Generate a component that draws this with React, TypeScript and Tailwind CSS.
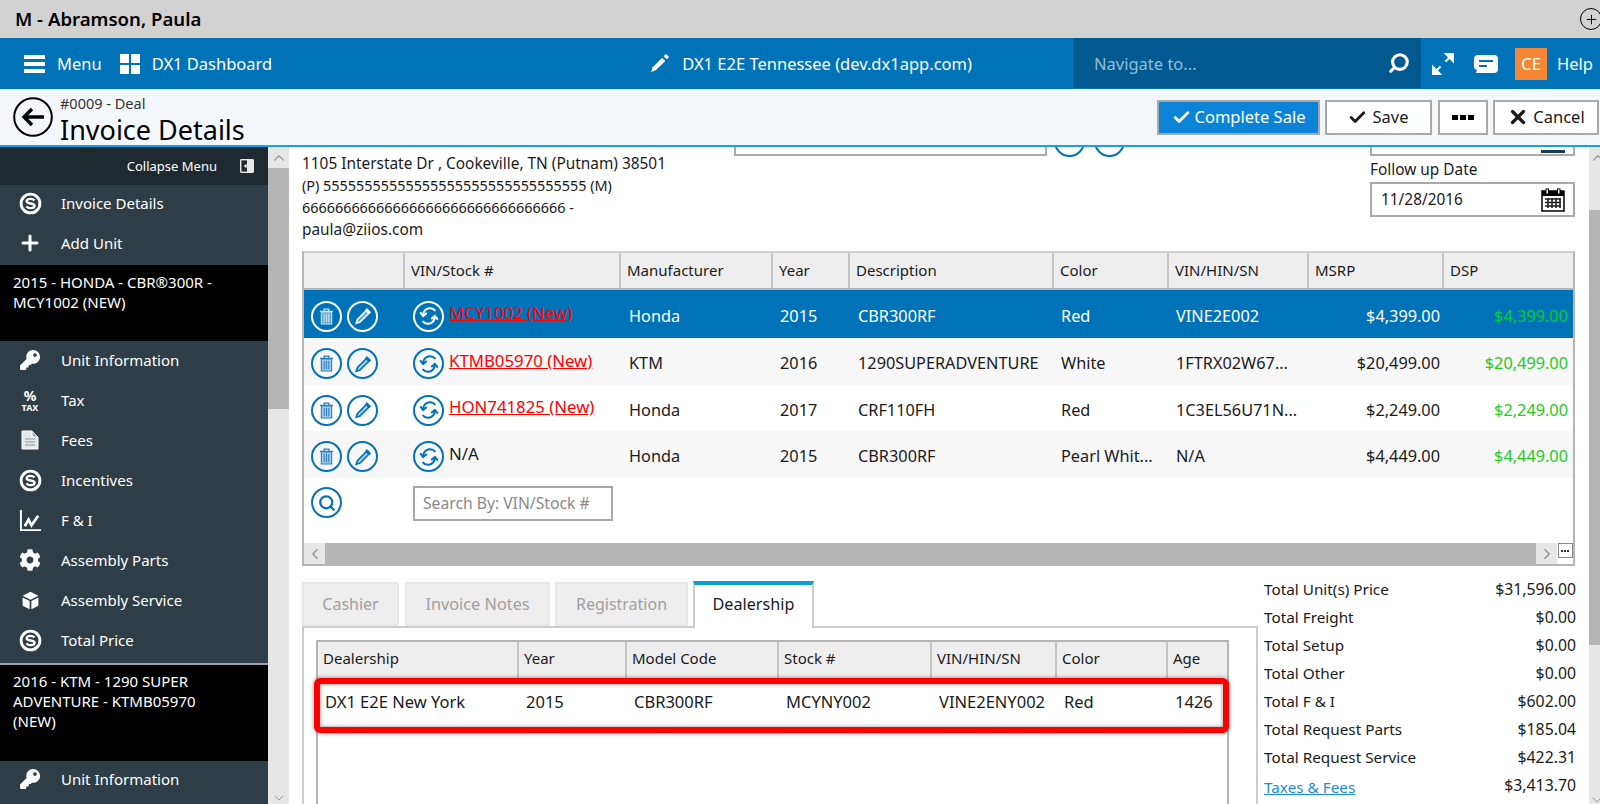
import { Check, ChevronDown, ChevronLeft, ChevronRight, ChevronUp, Plus, Search, X } from "lucide-react";
import { FaCog, FaKey } from "react-icons/fa";

const unitCols = "grid grid-cols-[101px_216px_152px_77px_204px_115px_140px_135px_131px]";
const dealerCols = "grid grid-cols-[201px_108px_152px_153px_125px_111px_63px]";

const units = [
  { stock: "MCY1002 (New)", link: true, make: "Honda", year: "2015", desc: "CBR300RF", color: "Red", vin: "VINE2E002", msrp: "$4,399.00", dsp: "$4,399.00" },
  { stock: "KTMB05970 (New)", link: true, make: "KTM", year: "2016", desc: "1290SUPERADVENTURE", color: "White", vin: "1FTRX02W67...", msrp: "$20,499.00", dsp: "$20,499.00" },
  { stock: "HON741825 (New)", link: true, make: "Honda", year: "2017", desc: "CRF110FH", color: "Red", vin: "1C3EL56U71N...", msrp: "$2,249.00", dsp: "$2,249.00" },
  { stock: "N/A", link: false, make: "Honda", year: "2015", desc: "CBR300RF", color: "Pearl Whit...", vin: "N/A", msrp: "$4,449.00", dsp: "$4,449.00" },
];

const totals = [
  ["Total Unit(s) Price", "$31,596.00"],
  ["Total Freight", "$0.00"],
  ["Total Setup", "$0.00"],
  ["Total Other", "$0.00"],
  ["Total F & I", "$602.00"],
  ["Total Request Parts", "$185.04"],
  ["Total Request Service", "$422.31"],
];

function DollarIcon() {
  return (
    <svg viewBox="0 0 24 24" className="h-[23px] w-[23px]" fill="none" stroke="white">
      <circle cx="12" cy="12" r="9.8" strokeWidth="3" />
      <path d="M16.2 8.8C15 7.6 13.6 7.2 12 7.2c-2.2 0-4 .9-4 2.5 0 3.4 8.2 1.3 8.2 4.6 0 1.6-1.9 2.5-4.2 2.5-1.7 0-3.2-.5-4.3-1.7" strokeWidth="2.5" />
    </svg>
  );
}

function TaxIcon() {
  return (
    <div className="flex flex-col items-center font-bold leading-none text-white">
      <span className="text-[14px] leading-[14px]">%</span>
      <span className="text-[9px] leading-[9px]">TAX</span>
    </div>
  );
}

function FileIcon() {
  return (
    <svg viewBox="0 0 18 20" className="h-[20px] w-[18px]">
      <path d="M1 1h10l6 6v12H1z" fill="#e4e8ea" stroke="white" />
      <path d="M11 1v6h6" fill="#9fb0b8" stroke="white" />
      <path d="M4 9h10M4 12h10M4 15h10" stroke="#87979f" />
    </svg>
  );
}

function ChartIcon() {
  return (
    <svg viewBox="0 0 24 24" className="h-[23px] w-[23px]" fill="none" stroke="white">
      <path d="M2 1v21h21" strokeWidth="2" />
      <path d="M6 18l4-7 3 6 7-10" strokeWidth="2.8" />
    </svg>
  );
}

function CubeIcon() {
  return (
    <svg viewBox="0 0 24 24" className="h-[21px] w-[21px]" fill="white">
      <path d="M12 2l9 4.5-9 4.5-9-4.5z" />
      <path d="M3 8.5l8 4V22l-8-4z" />
      <path d="M21 8.5l-8 4V22l8-4z" />
    </svg>
  );
}

function SideItem({ icon, label }: { icon: React.ReactNode; label: string }) {
  return (
    <div className="flex h-[40px] items-center text-white">
      <div className="flex w-[61px] justify-center pr-[1px]">{icon}</div>
      <span>{label}</span>
    </div>
  );
}

function Sidebar() {
  return (
    <div className="w-[268px] shrink-0 overflow-hidden bg-[#2f3e46] text-[15px]">
      <div className="flex h-[38px] items-center justify-end bg-[#1f2a30] pr-[14px] text-[13px] text-white">
        <span className="pt-[2px]">Collapse Menu</span>
        <svg viewBox="0 0 15 15" className="ml-[23px] h-[14px] w-[14px]">
          <rect width="15" height="15" rx="1.5" fill="#e8e8e8" />
          <rect x="1.5" y="1.5" width="6" height="12" fill="#1f2a30" />
          <path d="M7 5L4 7.5 7 10z" fill="white" />
        </svg>
      </div>
      <div className="-mt-[2px] h-[82px]">
        <SideItem icon={<DollarIcon />} label="Invoice Details" />
        <SideItem icon={<Plus className="h-[24px] w-[24px]" strokeWidth={3} />} label="Add Unit" />
      </div>
      <div className="h-[76px] bg-black px-[13px] pt-[7px] leading-[20px] text-white">
        2015 - HONDA - CBR®300R - MCY1002 (NEW)
      </div>
      <div className="-mt-[1px]">
        <SideItem icon={<FaKey className="h-[20px] w-[20px]" />} label="Unit Information" />
        <SideItem icon={<TaxIcon />} label="Tax" />
        <SideItem icon={<FileIcon />} label="Fees" />
        <SideItem icon={<DollarIcon />} label="Incentives" />
        <SideItem icon={<ChartIcon />} label="F & I" />
        <SideItem icon={<FaCog className="h-[22px] w-[22px]" />} label="Assembly Parts" />
        <SideItem icon={<CubeIcon />} label="Assembly Service" />
        <SideItem icon={<DollarIcon />} label="Total Price" />
      </div>
      <div className="mt-[3px] h-[2px] bg-[#9aa3a8]" />
      <div className="h-[96px] bg-black px-[13px] pt-[6px] leading-[20px] text-white">
        2016 - KTM - 1290 SUPER
        <br />
        ADVENTURE - KTMB05970
        <br />
        (NEW)
      </div>
      <div className="-mt-[2px]">
        <SideItem icon={<FaKey className="h-[20px] w-[20px]" />} label="Unit Information" />
      </div>
    </div>
  );
}

function CircleButton({ selected, children }: { selected?: boolean; children: React.ReactNode }) {
  return (
    <div className={selected ? "flex h-[31px] w-[31px] items-center justify-center rounded-full border-2 border-white text-white" : "flex h-[31px] w-[31px] items-center justify-center rounded-full border-2 border-[#0072b8] text-[#0072b8]"}>
      {children}
    </div>
  );
}

function TrashIcon({ selected }: { selected: boolean }) {
  return (
    <svg viewBox="0 0 16 18" className="h-[17px] w-[15px]" fill="none" stroke={selected ? "#cfe6f5" : "#2a7fba"}>
      <path d="M1 3.5h14M5.5 3V1.2h5V3" strokeWidth="1.4" />
      <path d="M2.5 4h11v13h-11z" fill={selected ? "#5ea6d4" : "#a9cfe8"} strokeWidth="1.2" />
      <path d="M5.5 6v9M8 6v9M10.5 6v9" strokeWidth="1.2" />
    </svg>
  );
}

function PencilIcon({ selected }: { selected: boolean }) {
  return (
    <svg viewBox="0 0 20 20" className="h-[20px] w-[20px]" fill="none" stroke="currentColor">
      <path d="M13.5 4.5l2.5 2.5L7 16l-3.8 1.2L4.5 13.5z" fill={selected ? "#5ea6d4" : "#a9cfe8"} strokeWidth="1.6" />
      <path d="M14 2.6l3.6 3.6-1.6 1.6-3.6-3.6z" fill="currentColor" strokeWidth="1" />
    </svg>
  );
}

function SwapIcon() {
  return (
    <svg viewBox="0 0 24 24" className="h-[22px] w-[22px]" fill="none" stroke="currentColor" strokeWidth="2.2">
      <path d="M19 6.5C17 4 14.5 3.2 12 3.6 8.6 4.2 6 7 5.6 11" />
      <path d="M2.4 8l3.2 4 4-3.2" />
      <path d="M5 17.5C7 20 9.5 20.8 12 20.4c3.4-.6 6-3.4 6.4-7.4" />
      <path d="M21.6 16l-3.2-4-4 3.2" />
    </svg>
  );
}

function UnitsTable() {
  return (
    <div className="flex h-[315px] w-[1273px] flex-col border-x-2 border-b-2 border-t-2 border-[#b5b5b5] border-t-[#d0d0d0] bg-white">
      <div className={`${unitCols} h-[37px] items-center border-b-2 border-[#b5b5b5] bg-[#eeeeee] text-[15px]`}>
        {["", "VIN/Stock #", "Manufacturer", "Year", "Description", "Color", "VIN/HIN/SN", "MSRP", "DSP"].map((h) => (
          <div key={h} className="flex h-full items-center border-r-2 border-[#c4c4c4] pl-[6px] last:border-r-0">{h}</div>
        ))}
      </div>
      {units.map((u, i) => (
        <div
          key={u.stock + i}
          className={i === 0 ? `${unitCols} h-[48px] items-center bg-[#0072b8] text-[16.3px] text-white` : i % 2 === 1 ? `${unitCols} h-[47px] items-center bg-[#f7f7f7] text-[16.3px]` : `${unitCols} h-[46px] items-center bg-white text-[16.3px]`}
        >
          <div className="flex gap-[5px] pl-[7px] pt-[4px]">
            <CircleButton selected={i === 0}><TrashIcon selected={i === 0} /></CircleButton>
            <CircleButton selected={i === 0}><PencilIcon selected={i === 0} /></CircleButton>
          </div>
          <div className="flex items-center pl-[8px] pt-[4px]">
            <CircleButton selected={i === 0}><SwapIcon /></CircleButton>
            <span className={u.link ? "ml-[5px] -translate-y-[3px] text-[16.8px] text-[#ff0000] underline" : "ml-[5px] -translate-y-[3px] text-[16.8px]"}>{u.stock}</span>
          </div>
          <div className="pl-[8px] pt-[4px]">{u.make}</div>
          <div className="pl-[7px] pt-[4px]">{u.year}</div>
          <div className="whitespace-nowrap pl-[8px] pt-[4px]">{u.desc}</div>
          <div className="pl-[7px] pt-[4px]">{u.color}</div>
          <div className="pl-[7px] pt-[4px]">{u.vin}</div>
          <div className="pr-[4px] pt-[4px] text-right">{u.msrp}</div>
          <div className={i === 0 ? "pr-[7px] pt-[4px] text-right text-[#00cc33]" : "pr-[7px] pt-[4px] text-right text-[#22cc22]"}>{u.dsp}</div>
        </div>
      ))}
      <div className={`${unitCols} flex-1`}>
        <div className="pl-[7px] pt-[9px]">
          <CircleButton><Search className="h-[18px] w-[18px]" strokeWidth={3} /></CircleButton>
        </div>
        <div className="pl-[8px] pt-[8px]">
          <div className="flex h-[35px] w-[200px] items-center whitespace-nowrap border-2 border-[#a9a9a9] pl-[8px] pt-[1px] text-[15.7px] text-[#8a8a8a]">Search By: VIN/Stock #</div>
        </div>
      </div>
      <div className="flex h-[21px] items-stretch bg-[#b5b5b5]">
        <div className="flex w-[21px] items-center justify-center bg-[#e6e6e6] text-[#8a8a8a]"><ChevronLeft className="h-[18px] w-[18px]" strokeWidth={1.5} /></div>
        <div className="flex-1" />
        <div className="flex w-[21px] items-center justify-center bg-[#e6e6e6] text-[#8a8a8a]"><ChevronRight className="h-[18px] w-[18px]" strokeWidth={1.5} /></div>
        <div className="flex w-[16px] items-start justify-center bg-white">
          <div className="flex h-[15px] w-[15px] items-center justify-center gap-[1px] border border-[#888888]">
            <div className="h-[2px] w-[2px] bg-[#333333]" />
            <div className="h-[2px] w-[2px] bg-[#333333]" />
            <div className="h-[2px] w-[2px] bg-[#333333]" />
          </div>
        </div>
      </div>
    </div>
  );
}

function DealershipPanel() {
  return (
    <div className="flex w-[956px] flex-col pt-[16px]">
      <div className="flex h-[44px] text-[16px]">
        <div className="flex w-[97px] items-center justify-center border-2 border-[#e8e8e8] bg-[#eeeeee] text-[#a0a0a0]">Cashier</div>
        <div className="ml-[6px] flex w-[145px] items-center justify-center whitespace-nowrap border-2 border-[#e8e8e8] bg-[#eeeeee] text-[16.3px] text-[#a0a0a0]">Invoice Notes</div>
        <div className="ml-[5px] flex w-[133px] items-center justify-center border-2 border-[#e8e8e8] bg-[#eeeeee] text-[#a0a0a0]">Registration</div>
        <div className="relative z-10 ml-[5px] -mt-[1px] flex h-[47px] w-[121px] items-center justify-center border-x-2 border-t-4 border-[#cccccc] border-t-[#0a9fd0] bg-white pb-[5px] text-[16.2px]">Dealership</div>
      </div>
      <div className="flex-1 border-x-2 border-t-2 border-[#cccccc] pl-[12px] pt-[12px]">
        <div className="relative h-full w-[913px] border-x-2 border-t-2 border-[#b5b5b5]">
          <div className={`${dealerCols} h-[36px] bg-[#eeeeee] text-[15px]`}>
            {["Dealership", "Year", "Model Code", "Stock #", "VIN/HIN/SN", "Color", "Age"].map((h) => (
              <div key={h} className="flex items-center border-r-2 border-[#c4c4c4] pb-[3px] pl-[5px] last:border-r-0">{h}</div>
            ))}
          </div>
          <div className={`${dealerCols} h-[48px] items-center text-[16.5px]`}>
            {["DX1 E2E New York", "2015", "CBR300RF", "MCYNY002", "VINE2ENY002", "Red", "1426"].map((v) => (
              <div key={v} className="whitespace-nowrap pl-[7px]">{v}</div>
            ))}
          </div>
          <div className="absolute -left-[4px] -right-[2px] top-[36px] h-[55px] rounded-[6px] border-[6px] border-[#ff0000] shadow-[0_0_4px_rgba(0,0,0,0.45),inset_0_0_4px_rgba(0,0,0,0.45)]" />
        </div>
      </div>
    </div>
  );
}

function Totals() {
  return (
    <div className="ml-[6px] flex w-[312px] flex-col pt-[9px] text-[15.3px] leading-[28px]">
      {totals.map(([label, value]) => (
        <div key={label} className="flex h-[28px] items-baseline justify-between">
          <span>{label}</span>
          <span className="text-[15.8px]">{value}</span>
        </div>
      ))}
      <div className="flex h-[28px] items-center justify-between">
        <span className="pt-[3px] text-[#1e88d8] underline">Taxes &amp; Fees</span>
        <span className="text-[15.8px]">$3,413.70</span>
      </div>
    </div>
  );
}

export default function App() {
  return (
    <div className="flex h-[804px] w-[1600px] flex-col overflow-hidden bg-white font-['Noto_Sans','Open_Sans',sans-serif] text-[15.4px] text-[#1a1a1a]">
      <div className="flex h-[38px] shrink-0 items-center justify-between bg-[#d2d2d2] pl-[15px]">
        <span className="text-[18.6px] font-semibold text-black">M - Abramson, Paula</span>
        <div className="flex h-[22px] w-[22px] translate-x-[2px] items-center justify-center rounded-full border-[1.5px] border-black text-black">
          <Plus className="h-[15px] w-[15px]" strokeWidth={1.5} />
        </div>
      </div>

      <div className="flex h-[51px] shrink-0 items-center bg-[#0072b8] text-[16.5px] text-white">
        <div className="flex w-[1073px] items-center">
          <div className="ml-[24px] flex w-[21px] flex-col gap-[3px]">
            <div className="h-[4px] bg-white" />
            <div className="h-[4px] bg-white" />
            <div className="h-[4px] bg-white" />
          </div>
          <span className="ml-[12px] pt-[2px]">Menu</span>
          <div className="ml-[18px] grid h-[20px] w-[20px] grid-cols-2 gap-[2px]">
            <div className="bg-white" />
            <div className="bg-white" />
            <div className="bg-white" />
            <div className="bg-white" />
          </div>
          <span className="ml-[12px] pt-[2px]">DX1 Dashboard</span>
          <svg viewBox="0 0 20 20" className="ml-[377px] h-[21px] w-[21px]" fill="white">
            <path d="M12.5 4.5l3 3L6.5 16.5 2 18l1.5-4.5z" />
            <path d="M14 3l1.5-1.5a1 1 0 0 1 1.4 0l1.6 1.6a1 1 0 0 1 0 1.4L17 6z" />
          </svg>
          <span className="ml-[12px] pt-[2px]">DX1 E2E Tennessee (dev.dx1app.com)</span>
        </div>
        <div className="flex h-[50px] w-[348px] items-center justify-between self-start bg-[#005a8f] pl-[21px] pr-[11px] text-[#8fbfdc]">
          <span className="pt-[2px]">Navigate to...</span>
          <Search className="h-[22px] w-[22px] -scale-x-100 text-white" strokeWidth={3.4} />
        </div>
        <svg viewBox="0 0 24 24" className="ml-[10px] h-[24px] w-[24px]" fill="white" stroke="white">
          <path d="M14.5 9.5L21 3M15 2h7v7z" strokeWidth="2" />
          <path d="M9.5 14.5L3 21M2 15v7h7z" strokeWidth="2" />
        </svg>
        <svg viewBox="0 0 26 20" className="ml-[18px] h-[20px] w-[26px]">
          <path d="M5 1h16a4 4 0 0 1 4 4v10a4 4 0 0 1-4 4H3l1-3a4 4 0 0 1-3-4V5a4 4 0 0 1 4-4z" fill="white" />
          <path d="M6 7h14M6 12h8" stroke="#0072b8" strokeWidth="2" />
        </svg>
        <div className="ml-[16px] flex h-[32px] w-[32px] items-center justify-center bg-[#f58634] text-[17px]">CE</div>
        <span className="ml-[10px] pt-[2px]">Help</span>
      </div>

      <div className="flex h-[58px] shrink-0 items-center justify-between border-b-2 border-[#1ba1e2] bg-[#f3f7fa] pr-[1px] text-[16.5px]">
        <div className="flex h-full items-center">
          <svg viewBox="0 0 40 40" className="ml-[13px] h-[40px] w-[40px]" fill="none" stroke="black">
            <circle cx="20" cy="20" r="18.8" strokeWidth="2" />
            <path d="M31 20H11M19 12l-8 8 8 8" strokeWidth="3.4" />
          </svg>
          <div className="ml-[7px] flex flex-col self-start pt-[5px]">
            <span className="text-[14.5px] leading-[18px] text-[#333333]">#0009 - Deal</span>
            <span className="text-[27px] leading-[36px] text-black">Invoice Details</span>
          </div>
        </div>
        <div className="flex items-center">
          <div className="flex h-[35px] w-[163px] items-center justify-center gap-[4px] border-2 border-[#a9a9a9] bg-[#0b84d8] text-white">
            <Check className="h-[19px] w-[19px]" strokeWidth={3.5} />
            Complete Sale
          </div>
          <div className="ml-[5px] flex h-[35px] w-[107px] items-center justify-center gap-[5px] border-2 border-[#a9a9a9] bg-white">
            <Check className="h-[19px] w-[19px]" strokeWidth={3.5} />
            Save
          </div>
          <div className="ml-[6px] flex h-[35px] w-[50px] items-center justify-center gap-[2px] border-2 border-[#a9a9a9] bg-white">
            <div className="h-[5px] w-[6px] bg-black" />
            <div className="h-[5px] w-[6px] bg-black" />
            <div className="h-[5px] w-[6px] bg-black" />
          </div>
          <div className="ml-[5px] flex h-[35px] w-[106px] items-center justify-center gap-[4px] border-2 border-[#a9a9a9] bg-white">
            <X className="h-[22px] w-[22px]" strokeWidth={3.5} />
            Cancel
          </div>
        </div>
      </div>

      <div className="flex min-h-0 flex-1">
        <Sidebar />

        <div className="flex w-[21px] shrink-0 flex-col bg-[#e6e6e6] text-[#9a9a9a]">
          <div className="flex h-[21px] items-center justify-center"><ChevronUp className="h-[18px] w-[18px]" strokeWidth={1.5} /></div>
          <div className="h-[241px] bg-[#b5b5b5]" />
          <div className="mt-auto flex h-[12px] items-center justify-center"><ChevronDown className="h-[16px] w-[16px]" strokeWidth={1.5} /></div>
        </div>

        <div className="flex min-w-0 flex-1 flex-col pl-[13px]">
          <div className="flex h-[104px] shrink-0">
            <div className="w-[432px] whitespace-nowrap pt-[6px] leading-[22px]">
              <div>1105 Interstate Dr , Cookeville, TN (Putnam) 38501</div>
              <div className="text-[14.4px]">(P) 55555555555555555555555555555555 (M)</div>
              <div className="text-[14.4px]">66666666666666666666666666666666 -</div>
              <div>paula@ziios.com</div>
            </div>
            <div className="h-[9px] w-[313px] border-x-2 border-b-2 border-[#a9a9a9]" />
            <div className="flex h-[10px] items-end overflow-hidden">
              <div className="ml-[7px] h-[31px] w-[31px] shrink-0 rounded-full border-2 border-[#0072b8]" />
              <div className="ml-[9px] h-[31px] w-[31px] shrink-0 rounded-full border-2 border-[#0072b8]" />
            </div>
            <div className="ml-auto mr-[14px] flex w-[205px] flex-col">
              <div className="flex h-[9px] justify-end overflow-hidden border-x-2 border-b-2 border-[#a9a9a9] pr-[8px]">
                <div className="h-[3px] w-[24px] translate-y-[3px] bg-[#1a3a5a]" />
              </div>
              <div className="mt-[3px] leading-[22px]">Follow up Date</div>
              <div className="mt-[1px] flex h-[35px] items-center justify-between border-2 border-[#a9a9a9] pl-[9px] pr-[8px]">
                <span>11/28/2016</span>
                <svg viewBox="0 0 24 24" className="h-[24px] w-[24px]">
                  <rect x="1" y="3" width="22" height="20" fill="white" stroke="black" strokeWidth="1.5" />
                  <rect x="1" y="3" width="22" height="5" fill="black" />
                  <rect x="5" y="1" width="2.5" height="5" fill="white" stroke="black" />
                  <rect x="16.5" y="1" width="2.5" height="5" fill="white" stroke="black" />
                  <path d="M4 11h16M4 14.5h16M4 18h16M7 10v10M11 10v10M15 10v10M19 10v10" stroke="#222" strokeWidth="1.6" />
                </svg>
              </div>
            </div>
          </div>

          <UnitsTable />

          <div className="flex min-h-0 flex-1">
            <DealershipPanel />
            <Totals />
          </div>
        </div>

        <div className="flex w-[11px] shrink-0 flex-col overflow-hidden bg-[#e6e6e6] text-[#9a9a9a]">
          <div className="flex h-[63px] justify-start pt-[2px]"><ChevronUp className="h-[18px] w-[18px] shrink-0" strokeWidth={1.5} /></div>
          <div className="h-[435px] bg-[#b5b5b5]" />
          <div className="mt-auto flex h-[12px]"><ChevronDown className="h-[16px] w-[16px] shrink-0" strokeWidth={1.5} /></div>
        </div>
      </div>
    </div>
  );
}
